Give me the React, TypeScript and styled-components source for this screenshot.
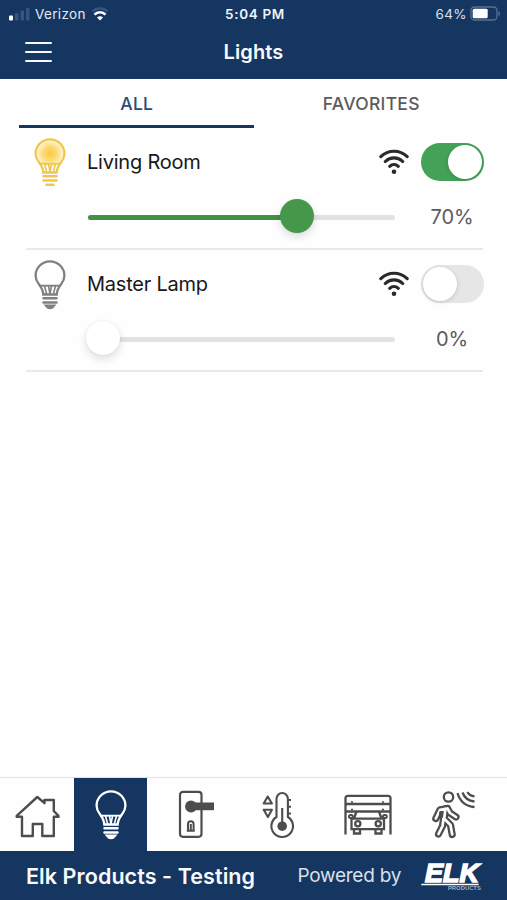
import React from "react";
import styled, { createGlobalStyle } from "styled-components";

const navy = "#153661";
const ink = "#4d4d4f";

const GlobalStyle = createGlobalStyle`
  * { box-sizing: border-box; }
  body { margin: 0; background: #fff; font-family: Inter, "Liberation Sans", sans-serif; }
`;

const Screen = styled.div`
  width: 507px;
  height: 900px;
  display: flex;
  flex-direction: column;
  overflow: hidden;
  background: #fefefe;
`;

const Header = styled.header`
  height: 79px;
  background: ${navy};
  color: #fff;
`;

const StatusBar = styled.div`
  height: 27px;
  display: grid;
  grid-template-columns: 1fr auto 1fr;
  align-items: center;
  padding: 0 6px 0 8px;
  font-size: 13.5px;
  line-height: 18px;
`;

const Carrier = styled.div`
  display: flex;
  align-items: center;
  gap: 5px;
  color: #e3eaf3;
  letter-spacing: 0.36px;
`;

const Clock = styled.div`
  font-weight: 600;
  font-size: 13.5px;
  letter-spacing: 0.65px;
  margin-right: -1px;
  color: #eef3fa;
`;

const Battery = styled.div`
  display: flex;
  align-items: center;
  justify-content: flex-end;
  gap: 3px;
  color: #d9e1ec;
  letter-spacing: 0.4px;
`;

const TitleBar = styled.div`
  height: 50px;
  display: grid;
  grid-template-columns: 1fr auto 1fr;
  align-items: center;
  padding: 0 25px;
`;

const MenuButton = styled.button`
  width: 27px;
  height: 20px;
  border: 0;
  padding: 0;
  background: none;
  display: flex;
  flex-direction: column;
  justify-content: space-between;
`;

const MenuLine = styled.span`
  height: 2.4px;
  width: 27px;
  border-radius: 1px;
  background: #f4f7fb;
`;

const Title = styled.h1`
  margin: 0;
  font-size: 20px;
  font-weight: 600;
  line-height: 24px;
  letter-spacing: 0.1px;
  color: #f8fafc;
`;

const Tabs = styled.nav`
  height: 49px;
  display: flex;
  padding: 0 19px;
`;

const Tab = styled.button<{ $active?: boolean }>`
  flex: 1;
  border: 0;
  background: none;
  border-bottom: 3px solid ${(p) => (p.$active ? navy : "transparent")};
  color: ${(p) => (p.$active ? "#294a78" : "#5b5b5d")};
  font: 500 17.5px/24px Inter, sans-serif;
  letter-spacing: 0.3px;
  padding: 4px 0 0 1px;
`;

const List = styled.main`
  flex: 1;
  padding: 0 24px 0 26px;
`;

const LightRow = styled.section`
  height: 122px;
  display: grid;
  grid-template-columns: 61px 308px 1fr;
  grid-template-rows: 67px 44px;
  align-items: center;
  border-bottom: 2px solid #e9e9e9;
`;

const BulbCell = styled.div`
  padding: 2px 0 0 7px;
  line-height: 0;
`;

const TopLine = styled.div`
  grid-column: 2 / 4;
  display: flex;
  align-items: center;
  margin-right: -1px;
`;

const Name = styled.span`
  flex: 1;
  font-size: 20px;
  line-height: 26px;
  letter-spacing: -0.22px;
  color: #18181a;
`;

const WifiCell = styled.span`
  width: 30px;
  margin-right: 12px;
  line-height: 0;
`;

const Switch = styled.button<{ $on: boolean }>`
  width: 63px;
  height: 38px;
  border: 0;
  border-radius: 19px;
  padding: 0 2px;
  display: flex;
  align-items: center;
  justify-content: ${(p) => (p.$on ? "flex-end" : "flex-start")};
  background: ${(p) => (p.$on ? "#43a257" : "#e6e6e6")};
`;

const Knob = styled.span`
  width: 34px;
  height: 34px;
  border-radius: 50%;
  background: #fff;
  box-shadow: 0 1px 4px rgba(0, 0, 0, 0.16);
`;

const Slider = styled.div`
  grid-column: 2;
  position: relative;
  height: 34px;
  display: flex;
  align-items: center;
  padding: 0 0 0 1px;
`;

const Track = styled.div`
  width: 100%;
  height: 5px;
  border-radius: 3px;
  background: #e2e2e2;
  overflow: hidden;
`;

const Fill = styled.div`
  height: 5px;
  background: #439147;
`;

const Thumb = styled.span<{ $on: boolean }>`
  position: absolute;
  top: -1px;
  width: 34px;
  height: 34px;
  border-radius: 50%;
  background: ${(p) => (p.$on ? "#459849" : "#fff")};
  box-shadow: 0 4px 9px rgba(0, 0, 0, 0.13), 0 0 2px rgba(0, 0, 0, 0.08);
`;

const Percent = styled.span`
  text-align: center;
  padding-left: 26px;
  font-size: 20px;
  line-height: 26px;
  letter-spacing: -0.15px;
  color: #5b5b5d;
`;

const BottomNav = styled.nav`
  height: 74px;
  display: grid;
  grid-template-columns: 74px 73px 97px 70px 107px 64px;
  border-top: 1px solid #e2e2e2;
`;

const NavItem = styled.button<{ $active?: boolean }>`
  border: 0;
  padding: 0;
  display: flex;
  align-items: center;
  justify-content: center;
  color: ${(p) => (p.$active ? "#fff" : ink)};
  background: ${(p) => (p.$active ? navy : "transparent")};
`;

const Footer = styled.footer`
  height: 49px;
  display: flex;
  align-items: center;
  background: ${navy};
  color: #f8fafc;
  padding: 0 24px 0 26px;
`;

const Site = styled.span`
  width: 272px;
  font-size: 21.5px;
  font-weight: 600;
  letter-spacing: 0.08px;
  white-space: nowrap;
`;

const Powered = styled.span`
  width: 124px;
  font-size: 19px;
  letter-spacing: -0.25px;
  white-space: nowrap;
  color: #d8e0eb;
`;

const Bulb = ({ kind }: { kind: "lit" | "off" | "nav" }) => {
  const c = kind === "lit" ? "#edc84d" : kind === "off" ? "#808080" : "#fff";
  return (
    <svg width="34" height="50" viewBox="0 0 34 50" fill="none" stroke={c} strokeWidth="2.3">
      <defs>
        <radialGradient id="glow" cx="50%" cy="50%" r="50%">
          <stop offset="0" stopColor="#fbc93d" />
          <stop offset=".55" stopColor="#fbdc79" />
          <stop offset="1" stopColor="#fff3cb" />
        </radialGradient>
      </defs>
      {kind === "lit" && <circle cx="17" cy="15.5" r="13" fill="url(#glow)" stroke="none" />}
      <path d="M10.3 34.500c-.2-5-2.200-7.500-4.500-10.500C3.700 21.400 2.600 19 2.600 15.700a14.400 14.400 0 0 1 28.800 0c0 3.300-1.100 5.700-3.200 8.300-2.300 3-4.300 5.500-4.500 10.500Z" />
      <path d="M6.500 25.700h21" strokeWidth="1.900" />
      <path d="m11.500 26 2.300 8.500M22.500 26l-2.300 8.500M15.500 26l1.500 8 1.500-8" strokeWidth="1.600" />
      <path d="M10.500 38.300h13M10.500 42.500h13" strokeWidth="2.500" strokeLinecap="round" />
      {kind === "lit" ? (
        <path d="M13.500 46.800h7" strokeWidth="2.500" strokeLinecap="round" />
      ) : (
        <path d="M10.500 44.500h13l-3.500 4q-3 1.500-6 0Z" fill={c} stroke="none" />
      )}
    </svg>
  );
};

const Wifi = () => (
  <svg width="30" height="26" viewBox="0 0 30 26" fill="none" stroke="#29292b" strokeWidth="3.100" strokeLinecap="round">
    <path d="M1.800 7.600c7.600-7.200 18.800-7.200 26.400 0M6.300 12.500c5-4.800 12.400-4.800 17.400 0M10.700 17.300c2.500-2.300 6.100-2.300 8.600 0" />
    <circle cx="15" cy="22.700" r="2.300" fill="#29292b" stroke="none" />
  </svg>
);

const Signal = () => (
  <svg width="22" height="14" viewBox="0 0 22 14">
    <rect x="1" y="8.500" width="4" height="5" rx="1" fill="#fff" />
    <g fill="#35557b">
      <rect x="7" y="6" width="3.500" height="7.500" rx="1" />
      <rect x="12.500" y="3.500" width="3.500" height="10" rx="1" />
      <rect x="18" y="1" width="3.500" height="12.500" rx="1" />
    </g>
  </svg>
);

const StatusWifi = () => (
  <svg width="18" height="14" viewBox="0 0 18 14" fill="none">
    <path d="M1.500 4.600a10.500 10.500 0 0 1 15 0" stroke="#35557b" strokeWidth="2.300" />
    <path d="M3.500 7.600a7.500 7.500 0 0 1 11 0" stroke="#fff" strokeWidth="2.600" />
    <path d="M6 10.400a4.200 4.200 0 0 1 6 0L9 13.500Z" fill="#fff" />
  </svg>
);

const BatteryIcon = () => (
  <svg width="31" height="15" viewBox="0 0 31 15">
    <rect x="1" y="1" width="26" height="13" rx="3.500" fill="none" stroke="#58718f" strokeWidth="1.300" />
    <rect x="2.700" y="2.700" width="15" height="9.600" rx="1.500" fill="#fff" />
    <path d="M28.500 5v5c2-.8 2-4.200 0-5Z" fill="#58718f" />
  </svg>
);

const House = () => (
  <svg width="46" height="50" viewBox="0 0 46 50" fill="none" stroke="currentColor" strokeWidth="2.400" strokeLinejoin="round">
    <path d="M23.300 7 30.500 13.200V10H39.800V21l4.700 4.800v1H39.800V46H28.300V34H18.800V46H8V26.800H2.700v-1Z" />
  </svg>
);

const DoorLock = () => (
  <svg width="40" height="50" viewBox="0 0 40 50" fill="none" stroke="currentColor" strokeWidth="2.200">
    <rect x="4" y="1.800" width="21.500" height="45" rx="3" />
    <circle cx="15" cy="16.500" r="5.900" fill="currentColor" stroke="none" />
    <path d="M15 12.500h23v7.700H15Z" fill="currentColor" stroke="none" />
    <path d="M12 40.200v-6.200a2.800 2.800 0 0 1 5.600 0v6.200M10.800 40.700h8M14.800 34v6" strokeWidth="2" />
  </svg>
);

const Thermometer = () => (
  <svg width="34" height="50" viewBox="0 0 34 50" fill="none" stroke="currentColor" strokeWidth="2.100" strokeLinejoin="round">
    <path d="M14.500 27V8.700a5.700 5.700 0 0 1 11.400 0V27a10.800 10.800 0 1 1-11.400 0Z" />
    <circle cx="20.200" cy="36.200" r="4.800" fill="currentColor" stroke="none" />
    <path d="M20.200 36.200V18M26 10h3M26 16.700h3M26 23.500h3" />
    <path d="M5.700 6.500 1.700 13.500h8.200ZM1.700 19.700h8.200L5.900 27Z" />
  </svg>
);

const Garage = () => (
  <svg width="50" height="50" viewBox="0 0 50 50" fill="none" stroke="currentColor" strokeWidth="2.300">
    <path d="M2.500 44.500V8.300q0-2.500 2.500-2.500h40q2.500 0 2.500 2.500v36.200M3 14h44M3 21.500h44" />
    <path d="M8 12h2M39 12h2M8 19.500h2M39 19.500h2" strokeWidth="1.500" />
    <path d="m11 28.500 2.500-7M38.500 28.500l-2.500-7M8.500 28.700h32.500v10.500H8.500ZM11 39.500v4h6v-4M32.500 39.500v4h6v-4" />
    <circle cx="14.800" cy="33.800" r="2.600" />
    <circle cx="35.200" cy="33.800" r="2.600" />
    <rect x="6" y="25" width="3.800" height="3" rx="1.500" strokeWidth="2" />
    <rect x="40" y="25" width="3.800" height="3" rx="1.500" strokeWidth="2" />
  </svg>
);

const limbs = "M17.500 18.500 10 19.800 5.800 28.500M15.500 18.500 14 30M17.500 18.500 20 23l6 4M13.500 28.500 12.500 36l-4 8M14.500 29l6 6 1.700 9.500";

const Motion = () => (
  <svg width="46" height="50" viewBox="0 0 46 50" fill="none" stroke="currentColor" strokeWidth="2.300" strokeLinejoin="round" strokeLinecap="round">
    <circle cx="18.500" cy="7" r="4.700" />
    <path d={limbs} strokeWidth="7.200" />
    <path d={limbs} stroke="#fefefe" strokeWidth="2.700" />
    <path d="m10.300 22-.8 6" strokeWidth="2" />
    <path d="M27.500 3c2.500 8.500 8.500 13.500 17 14M32.500 2.500c2 5.500 6 8.500 12 9M37.500 2c1.300 2.700 3.500 4 7 4.300" strokeLinecap="butt" />
  </svg>
);

const ElkLogo = () => (
  <svg width="62" height="36" viewBox="0 -3 62 36" fill="#fff" fontFamily="Liberation Sans, sans-serif">
    <text x="4" y="21.300" fontSize="26.500" fontWeight="700" fontStyle="italic" textLength="54" lengthAdjust="spacingAndGlyphs" stroke="#fff" strokeWidth="1.600">ELK</text>
    <path d="M.6 22.700H58l-.4 1.600H0Z" />
    <text x="27" y="29.500" fontSize="5.500" fontWeight="700" fill="#9fb2c9" textLength="33" lengthAdjust="spacingAndGlyphs">PRODUCTS</text>
  </svg>
);

const lights = [
  { name: "Living Room", level: 70, on: true },
  { name: "Master Lamp", level: 0, on: false },
];

export default function App() {
  return (
    <Screen>
      <GlobalStyle />
      <Header>
        <StatusBar>
          <Carrier><Signal />Verizon<StatusWifi /></Carrier>
          <Clock>5:04 PM</Clock>
          <Battery>64%<BatteryIcon /></Battery>
        </StatusBar>
        <TitleBar>
          <MenuButton aria-label="Menu"><MenuLine /><MenuLine /><MenuLine /></MenuButton>
          <Title>Lights</Title>
        </TitleBar>
      </Header>
      <Tabs>
        <Tab $active>ALL</Tab>
        <Tab>FAVORITES</Tab>
      </Tabs>
      <List>
        {lights.map((light) => (
          <LightRow key={light.name}>
            <BulbCell><Bulb kind={light.on ? "lit" : "off"} /></BulbCell>
            <TopLine>
              <Name>{light.name}</Name>
              <WifiCell><Wifi /></WifiCell>
              <Switch $on={light.on} aria-label={light.name}><Knob /></Switch>
            </TopLine>
            <Slider>
              <Track><Fill style={{ width: `${light.level}%` }} /></Track>
              <Thumb $on={light.on} style={{ left: `calc((100% - 31px) * ${light.level / 100} - 1px)` }} />
            </Slider>
            <Percent>{light.level}%</Percent>
          </LightRow>
        ))}
      </List>
      <BottomNav>
        <NavItem aria-label="Home"><House /></NavItem>
        <NavItem $active aria-label="Lights"><Bulb kind="nav" /></NavItem>
        <NavItem aria-label="Locks"><DoorLock /></NavItem>
        <NavItem aria-label="Climate"><Thermometer /></NavItem>
        <NavItem aria-label="Garage"><Garage /></NavItem>
        <NavItem aria-label="Sensors"><Motion /></NavItem>
      </BottomNav>
      <Footer>
        <Site>Elk Products - Testing</Site>
        <Powered>Powered by</Powered>
        <ElkLogo />
      </Footer>
    </Screen>
  );
}
